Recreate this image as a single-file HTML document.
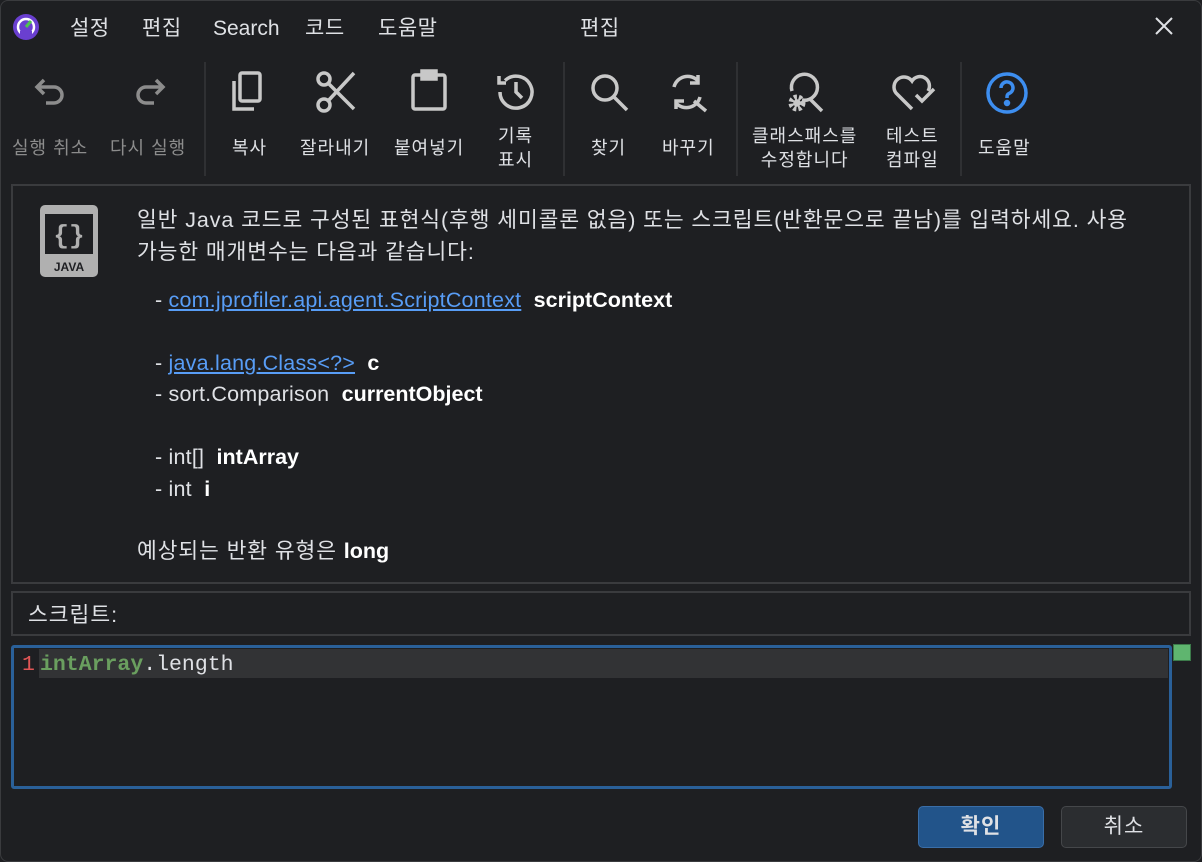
<!DOCTYPE html>
<html><head><meta charset="utf-8"><style>
*{margin:0;padding:0;box-sizing:border-box}
body{width:1202px;height:862px;background:#1e1f22;font-family:"Liberation Sans","Noto Sans CJK KR",sans-serif;color:#dfe1e5;position:relative;overflow:hidden}
.a{position:absolute;white-space:nowrap}
.m{font-size:21px;top:14px;line-height:30px;letter-spacing:0.5px}
.lbl{font-size:18px;color:#dfe1e5;text-align:center;line-height:24px;letter-spacing:1px}
.dis{color:#8c8c8c}
.sep{position:absolute;top:62px;width:2px;height:114px;background:#2f3033}
.t{font-size:21.5px;line-height:32px;letter-spacing:0.9px}
a{color:#589df6;text-decoration:underline}
b{font-weight:bold;color:#fff}
svg{position:absolute}
</style></head><body>
<div style="position:absolute;inset:0;border:1px solid #3a3b3e;border-radius:8px;pointer-events:none"></div>
<svg style="left:12px;top:13px" width="28" height="28" viewBox="0 0 28 28"><circle cx="14" cy="14" r="13" fill="#6a3fd0"/><circle cx="14" cy="14" r="8" fill="none" stroke="#fff" stroke-width="2.5"/><path d="M14 14 L19 8" stroke="#4fc34f" stroke-width="3"/><rect x="8" y="18" width="12" height="6" fill="#6a3fd0"/></svg>
<div class="a m" style="left:70px">설정</div>
<div class="a m" style="left:142px">편집</div>
<div class="a m" style="left:213px;letter-spacing:0">Search</div>
<div class="a m" style="left:305px">코드</div>
<div class="a m" style="left:378px">도움말</div>
<div class="a m" style="left:580px">편집</div>
<svg style="left:1154px;top:16px" width="20" height="20"><path d="M2 2L18 18M18 2L2 18" stroke="#dfe1e5" stroke-width="2"/></svg>

<svg style="left:32px;top:74px" width="40" height="40" viewBox="0 0 40 40" fill="none" stroke="#8c8c8c" stroke-width="3.5"><path d="M12 6L5 13L12 20M5 13H22a8 8 0 0 1 0 16H14"/></svg>
<svg style="left:128px;top:74px" width="40" height="40" viewBox="0 0 40 40" fill="none" stroke="#8c8c8c" stroke-width="3.5"><path d="M28 6L35 13L28 20M35 13H18a8 8 0 0 0 0 16H26"/></svg>
<svg style="left:228px;top:69px" width="44" height="44" viewBox="0 0 44 44" fill="none" stroke="#c8c8c8" stroke-width="3.5"><rect x="12" y="4" width="20" height="28" rx="2"/><path d="M6 12V40H26"/></svg>
<svg style="left:314px;top:69px" width="46" height="46" viewBox="0 0 46 46" fill="none" stroke="#c8c8c8" stroke-width="3.5"><circle cx="10" cy="10" r="6"/><circle cx="10" cy="36" r="6"/><path d="M14 14L40 40M14 32L40 4"/></svg>
<svg style="left:408px;top:67px" width="44" height="46" viewBox="0 0 44 46" fill="none" stroke="#c8c8c8" stroke-width="3.5"><rect x="5" y="8" width="32" height="34" rx="2"/><rect x="14" y="4" width="14" height="8" fill="#c8c8c8"/></svg>
<svg style="left:494px;top:70px" width="44" height="44" viewBox="0 0 44 44" fill="none" stroke="#c8c8c8" stroke-width="3.5"><path d="M6 22a16 16 0 1 0 5-11.5M5 6V13H12"/><path d="M22 12V22L28 28"/></svg>
<div class="sep" style="left:204px"></div>
<svg style="left:588px;top:71px" width="44" height="44" viewBox="0 0 44 44" fill="none" stroke="#c8c8c8" stroke-width="3.5"><circle cx="17" cy="17" r="12"/><path d="M26 26L39 39"/></svg>
<svg style="left:668px;top:71px" width="44" height="44" viewBox="0 0 44 44" fill="none" stroke="#c8c8c8" stroke-width="3.5"><path d="M6 16a14 14 0 0 1 24-6M30 4V12H22M32 26a14 14 0 0 1-24 6M8 38V30H16M26 30L38 40"/></svg>
<div class="sep" style="left:563px"></div>
<svg style="left:782px;top:69px" width="48" height="48" viewBox="0 0 48 48" fill="none" stroke="#c8c8c8" stroke-width="3.5"><path d="M10 22a13 13 0 1 1 10 9M28 30L40 42"/><circle cx="15" cy="34" r="6" stroke-width="5" stroke-dasharray="3 2"/><circle cx="15" cy="34" r="2" fill="#c8c8c8"/></svg>
<svg style="left:890px;top:71px" width="48" height="44" viewBox="0 0 48 44" fill="none" stroke="#c8c8c8" stroke-width="3.5"><path d="M22 38L6 22a9 9 0 0 1 16-12a9 9 0 0 1 16 10"/><path d="M26 24L32 30L44 18"/></svg>
<div class="sep" style="left:736px"></div>
<svg style="left:985px;top:71px" width="44" height="44" viewBox="0 0 44 44" fill="none" stroke="#3d8ef0" stroke-width="3.5"><circle cx="22" cy="22" r="19"/><path d="M16 17a6 6 0 1 1 8 5.5c-2 1-2 2-2 4.5"/><circle cx="22" cy="32" r="1.5" fill="#3d8ef0"/></svg>
<div class="sep" style="left:960px"></div>

<div class="a lbl dis" style="left:12px;top:136px">실행 취소</div>
<div class="a lbl dis" style="left:110px;top:136px">다시 실행</div>
<div class="a lbl" style="left:232px;top:136px">복사</div>
<div class="a lbl" style="left:300px;top:136px">잘라내기</div>
<div class="a lbl" style="left:394px;top:136px">붙여넣기</div>
<div class="a lbl" style="left:498px;top:124px">기록<br>표시</div>
<div class="a lbl" style="left:591px;top:136px">찾기</div>
<div class="a lbl" style="left:662px;top:136px">바꾸기</div>
<div class="a lbl" style="left:752px;top:124px">클래스패스를<br>수정합니다</div>
<div class="a lbl" style="left:886px;top:124px">테스트<br>컴파일</div>
<div class="a lbl" style="left:978px;top:136px">도움말</div>

<div class="a" style="left:11px;top:184px;width:1180px;height:400px;border:2px solid #3a3b3e"></div>
<svg style="left:40px;top:205px" width="58" height="72" viewBox="0 0 58 72"><rect x="0" y="0" width="58" height="72" rx="5" fill="#b0b0b0"/><rect x="5" y="9" width="48" height="40" fill="#1e1f22"/><text x="29" y="38" fill="#b0b0b0" font-size="26" font-weight="bold" text-anchor="middle" font-family="Liberation Mono">{}</text><text x="29" y="66" fill="#1e1f22" font-size="12" font-weight="bold" text-anchor="middle" font-family="Liberation Sans">JAVA</text></svg>
<div class="a t" style="left:137px;top:204px">일반 Java 코드로 구성된 표현식(후행 세미콜론 없음) 또는 스크립트(반환문으로 끝남)를 입력하세요. 사용<br>가능한 매개변수는 다음과 같습니다:</div>
<div class="a t" style="left:155px;top:284px;letter-spacing:0.2px">- <a>com.jprofiler.api.agent.ScriptContext</a>&nbsp; <b style="letter-spacing:0">scriptContext</b></div>
<div class="a t" style="left:155px;top:347px;letter-spacing:0.2px">- <a>java.lang.Class&lt;?&gt;</a>&nbsp; <b>c</b></div>
<div class="a t" style="left:155px;top:378px;letter-spacing:0.2px">- sort.Comparison&nbsp; <b style="letter-spacing:0">currentObject</b></div>
<div class="a t" style="left:155px;top:441px;letter-spacing:0.2px">- int[]&nbsp; <b style="letter-spacing:0">intArray</b></div>
<div class="a t" style="left:155px;top:473px;letter-spacing:0.2px">- int&nbsp; <b>i</b></div>
<div class="a t" style="left:137px;top:535px">예상되는 반환 유형은 <b style="letter-spacing:0">long</b></div>

<div class="a" style="left:11px;top:591px;width:1180px;height:45px;border:2px solid #3a3b3e"></div>
<div class="a" style="left:28px;top:598px;font-size:21.5px;letter-spacing:1px">스크립트:</div>

<div class="a" style="left:11px;top:645px;width:1161px;height:144px;border:3px solid #2a6099;border-radius:3px"></div>
<div class="a" style="left:39px;top:649px;width:1129px;height:29px;background:#323335"></div>
<div class="a" style="left:22px;top:653px;font-family:'Liberation Mono',monospace;font-size:21.5px;color:#e05555">1</div>
<div class="a" style="left:40px;top:653px;font-family:'Liberation Mono',monospace;font-size:21.5px;color:#dfe1e5"><span style="color:#6a9f5f;font-weight:bold">intArray</span>.length</div>
<div class="a" style="left:1173px;top:644px;width:18px;height:17px;background:#5fb56f;border:1px solid #3c7a4a"></div>

<div class="a" style="left:918px;top:806px;width:126px;height:42px;background:#22548a;border:1px solid #3a6ea8;border-radius:5px;font-size:21px;font-weight:bold;text-align:center;line-height:40px;letter-spacing:1px">확인</div>
<div class="a" style="left:1061px;top:806px;width:126px;height:42px;background:#2b2d30;border:1px solid #45474a;border-radius:5px;font-size:21px;text-align:center;line-height:40px;letter-spacing:1px">취소</div>
</body></html>
